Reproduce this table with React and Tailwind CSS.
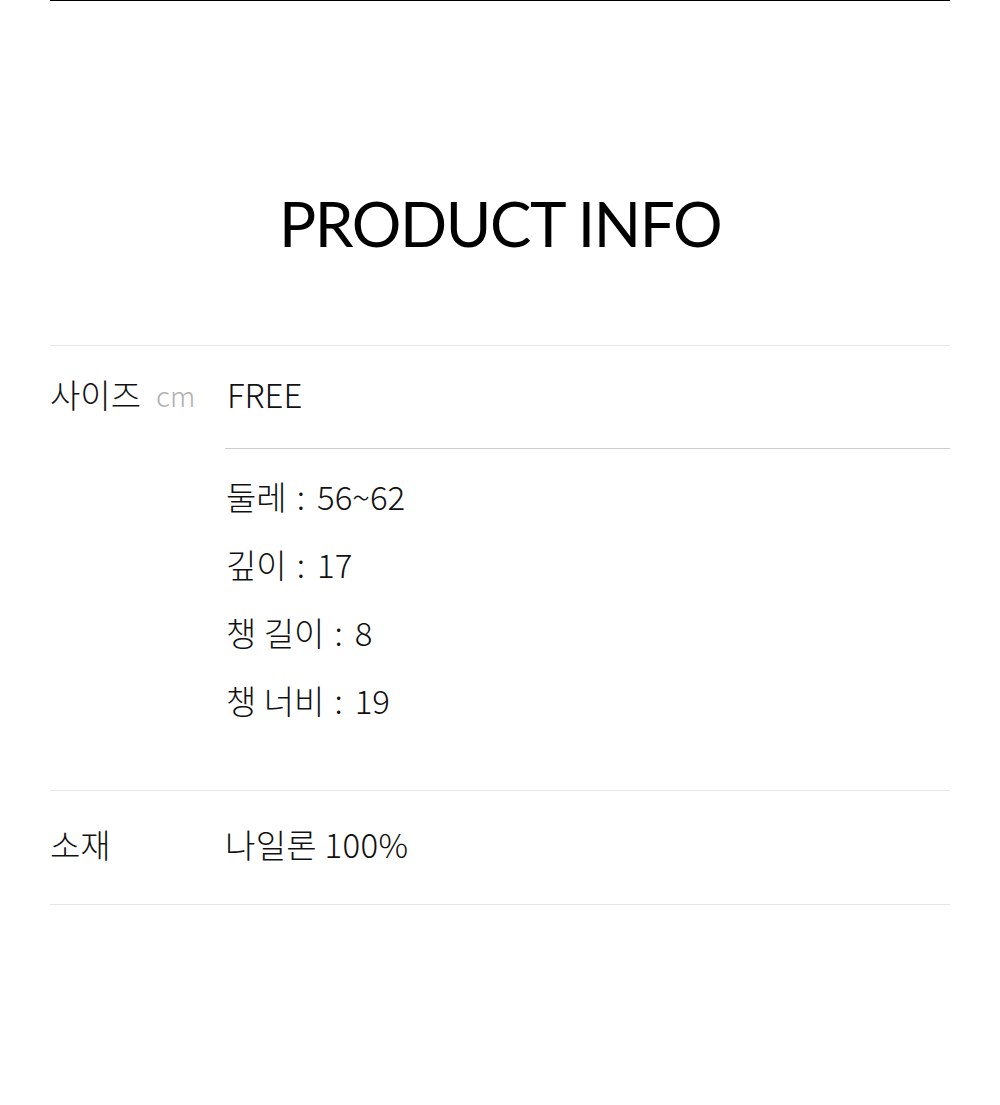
export default function App() {
  const kr = { fontFamily: '"Noto Sans CJK KR", "Noto Sans", sans-serif' };
  const Item = ({ label, value }) => (
    <div className="h-[68px] flex items-center pb-[5px]">
      <span>{label}</span>
      <span className="ml-[10px] mr-[12px]">:</span>
      <span>{value}</span>
    </div>
  );
  return (
    <div className="w-[1000px] min-h-[1105px] bg-white text-[#111]" style={kr}>
      <div className="mx-[50px] border-t border-black">
        <div className="pt-[189px] pb-[89px] flex justify-center">
          <h1
            className="text-[62px] leading-[66px] tracking-[-1.4px] text-black font-normal"
            style={{ fontFamily: 'Lato, "Noto Sans", sans-serif' }}
          >
            PRODUCT INFO
          </h1>
        </div>
        <div className="border-t border-[#e6e6e6] flex">
          <div className="w-[175px] shrink-0 h-[103px] flex items-center gap-[15px] text-[33px] font-light pb-[5px]">
            <span>사이즈</span>
            <span className="text-[28px] text-[#b0b0b0]">cm</span>
          </div>
          <div className="flex-1">
            <div className="h-[103px] flex items-center border-b border-[#cccccc] text-[33px] font-light pb-[5px]">
              <span className="pl-[2px]">FREE</span>
            </div>
            <div className="pt-[16px] pb-[53px] flex flex-col text-[33px] font-light pl-[1px]">
              <Item label="둘레" value="56~62" />
              <Item label="깊이" value="17" />
              <Item label="챙 길이" value="8" />
              <Item label="챙 너비" value="19" />
            </div>
          </div>
        </div>
        <div className="border-t border-b border-[#e6e6e6] flex h-[115px] items-center text-[33px] font-light pb-[5px]">
          <div className="w-[175px] shrink-0">소재</div>
          <div className="tracking-[0.3px]">나일론 100%</div>
        </div>
      </div>
    </div>
  );
}
